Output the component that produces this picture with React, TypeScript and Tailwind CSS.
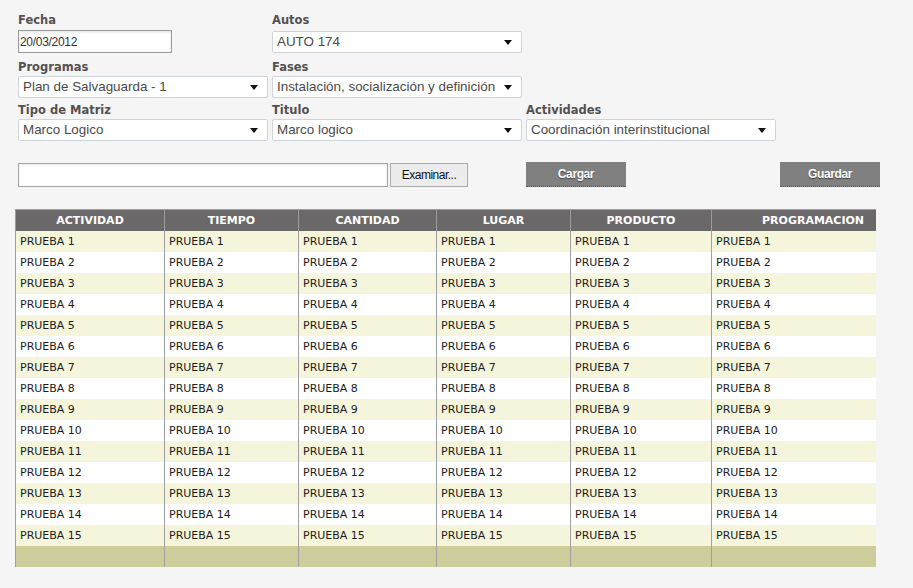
const COLS = [
  { name: "ACTIVIDAD", w: "w-[149px]" },
  { name: "TIEMPO", w: "w-[134px]" },
  { name: "CANTIDAD", w: "w-[138px]" },
  { name: "LUGAR", w: "w-[134px]" },
  { name: "PRODUCTO", w: "w-[141px]" },
  { name: "PROGRAMACION", w: "w-[165px]" },
];

const ROWS = Array.from({ length: 15 }, (_, i) => `PRUEBA ${i + 1}`);

function Label({ children }: { children: string }) {
  return (
    <div className="h-[14px] text-[11.5px] leading-[16px] font-bold text-[#545050] font-['DejaVu_Sans',sans-serif]">
      {children}
    </div>
  );
}

function Select({ value }: { value: string }) {
  return (
    <div className="w-[250px] h-[22px] bg-white border border-[#cfd3da] rounded-[2px] flex items-center pl-[4px] pr-[9px] font-['Liberation_Sans',sans-serif] text-[13.4px] text-[#4a4a4a]">
      <span className="flex-1 whitespace-nowrap overflow-hidden">{value}</span>
      {/* little filled arrow */}
      <svg width="8" height="5" viewBox="0 0 8 5" className="shrink-0 ml-[4px]">
        <path d="M0 0h8L4 5z" fill="#111" />
      </svg>
    </div>
  );
}

export default function App() {
  return (
    <div className="w-[913px] h-[588px] bg-[#f5f5f5] overflow-hidden">
      {/* Filters */}
      <div className="pl-[18px] pt-[12px]">
        <div className="flex gap-[4px]">
          <div className="w-[250px]">
            <Label>Fecha</Label>
            <div className="mt-[4px] w-[154px] h-[23px] bg-white border border-[#9a9a9a] shadow-[inset_0_1px_3px_rgba(0,0,0,0.12)] flex items-center pl-[1px] font-['Liberation_Sans',sans-serif] text-[12px] text-[#333] tracking-[-0.3px]">
              20/03/2012
            </div>
          </div>
          <div className="w-[250px]">
            <Label>Autos</Label>
            <div className="mt-[5px]">
              <Select value="AUTO 174" />
            </div>
          </div>
        </div>

        <div className="flex gap-[4px] mt-[6px]">
          <div className="w-[250px]">
            <Label>Programas</Label>
            <div className="mt-[3px]">
              <Select value="Plan de Salvaguarda - 1" />
            </div>
          </div>
          <div className="w-[250px]">
            <Label>Fases</Label>
            <div className="mt-[3px]">
              <Select value="Instalación, socialización y definición" />
            </div>
          </div>
        </div>

        <div className="flex gap-[4px] mt-[4px]">
          <div className="w-[250px]">
            <Label>Tipo de Matriz</Label>
            <div className="mt-[3px]">
              <Select value="Marco Logico" />
            </div>
          </div>
          <div className="w-[250px]">
            <Label>Titulo</Label>
            <div className="mt-[3px]">
              <Select value="Marco logico" />
            </div>
          </div>
          <div className="w-[250px]">
            <Label>Actividades</Label>
            <div className="mt-[3px]">
              <Select value="Coordinación interinstitucional" />
            </div>
          </div>
        </div>

        {/* Upload + actions */}
        <div className="flex items-start mt-[21px]">
          <div className="w-[370px] h-[24px] mt-[1px] bg-white border border-[#a5a5a5] shadow-[inset_0_1px_3px_rgba(0,0,0,0.1)]" />
          <button
            type="button"
            className="ml-[2px] mt-[1px] w-[78px] h-[24px] bg-[#ececec] border border-[#ababab] text-[12px] text-[#111] font-['Liberation_Sans',sans-serif] tracking-[-0.5px]"
          >
            Examinar...
          </button>
          <button
            type="button"
            className="ml-[58px] w-[100px] h-[25px] bg-[#808080] border-b border-dotted border-[#5a5a5a] text-white font-bold text-[12px] font-['Liberation_Sans',sans-serif] tracking-[-0.4px] [text-shadow:0_1px_1px_rgba(0,0,0,0.5)]"
          >
            Cargar
          </button>
          <button
            type="button"
            className="ml-[154px] w-[100px] h-[25px] bg-[#808080] border-b border-dotted border-[#5a5a5a] text-white font-bold text-[12px] font-['Liberation_Sans',sans-serif] tracking-[-0.4px] [text-shadow:0_1px_1px_rgba(0,0,0,0.5)]"
          >
            Guardar
          </button>
        </div>
      </div>

      {/* Table */}
      <div className="pl-[15px] mt-[22px] font-['DejaVu_Sans',sans-serif] text-[11px]">
        <div className="w-[861px]">
          {/* Header */}
          <div className="flex h-[22px] bg-[#6b6869] border-t border-[#a09ea0]">
            {COLS.map((c, i) => (
              <div
                key={c.name}
                className={`${c.w} border-l border-[#9c9c9c] ${
                  i === 5 ? "text-left pl-[50px]" : "text-center"
                } leading-[22px] font-bold text-white`}
              >
                {c.name}
              </div>
            ))}
          </div>

          {/* Body */}
          {ROWS.map((r, ri) => (
            <div
              key={r}
              className={`flex h-[21px] ${ri % 2 === 0 ? "bg-[#f5f5dc]" : "bg-white"}`}
            >
              {COLS.map((c) => (
                <div
                  key={c.name}
                  className={`${c.w} border-l border-[#a0a0a0] pl-[4px] leading-[22px] text-[#1c1c1c]`}
                >
                  {r}
                </div>
              ))}
            </div>
          ))}

          {/* Footer */}
          <div className="flex h-[21px] bg-[#cdcd9b]">
            {COLS.map((c) => (
              <div key={c.name} className={`${c.w} border-l border-[#a0a0a0]`} />
            ))}
          </div>
        </div>
      </div>
    </div>
  );
}
